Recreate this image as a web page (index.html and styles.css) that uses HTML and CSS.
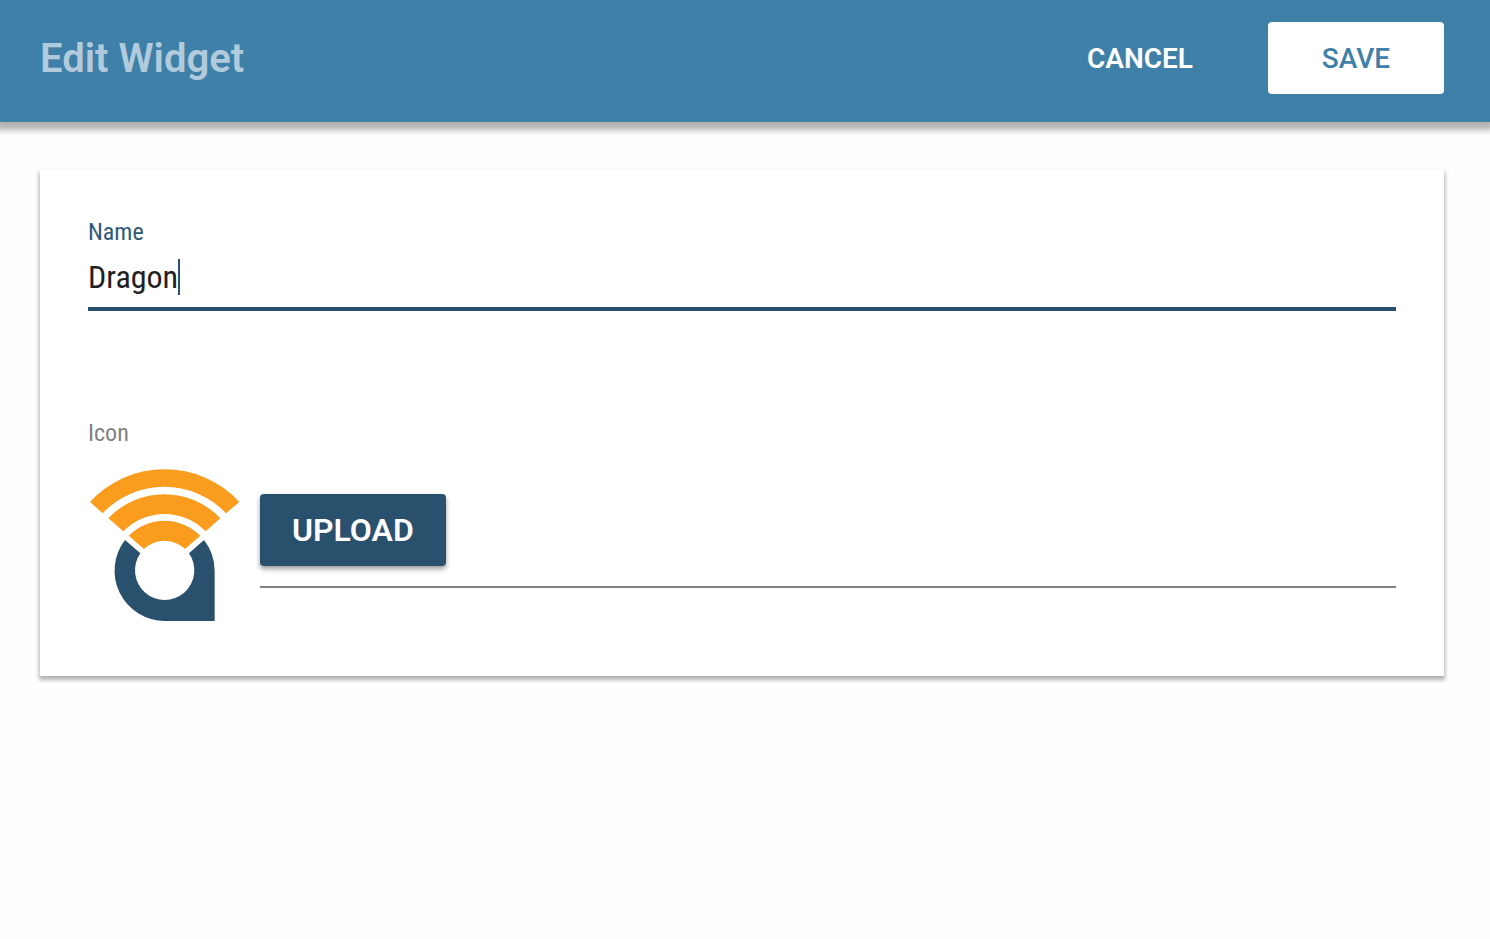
FILE: index.html
```html
<!DOCTYPE html>
<html lang="en">
<head>
<meta charset="utf-8">
<title>Edit Widget</title>
<link rel="stylesheet" href="styles.css">
</head>
<body>
<header class="toolbar">
  <h1 class="title">Edit Widget</h1>
  <div class="actions">
    <button class="btn btn-flat" type="button">CANCEL</button>
    <button class="btn btn-save" type="submit" form="widget-form">SAVE</button>
  </div>
</header>
<main class="content">
  <form class="card" id="widget-form">
    <div class="field">
      <label class="label label-active" for="name">Name</label>
      <div class="input-row">
        <input class="input" id="name" type="text" value="Dragon" size="6">
        <span class="caret"></span>
      </div>
    </div>
    <div class="field">
      <label class="label" for="upload">Icon</label>
      <div class="icon-row">
        <svg class="icon" viewBox="24 27 456 456" role="img" aria-label="Widget icon">
          <g fill="#fa9d1f">
            <path d="M30 126A304 304 0 0 1 478 126L438 160A254 254 0 0 0 68 160Z"/>
            <path d="M85 175A231 231 0 0 1 421 175L377 214A172 172 0 0 0 130 214Z"/>
            <path d="M146 227A152 152 0 0 1 361 227L315 267A89 89 0 0 0 192 267Z"/>
          </g>
          <path fill="#29506c" d="M135 240A151 151 0 0 0 254 483H404V332A151 151 0 0 0 372 240L327 280A89 89 0 1 1 181 280Z"/>
        </svg>
        <div class="upload-line">
          <button class="btn btn-upload" id="upload" type="button">UPLOAD</button>
        </div>
      </div>
    </div>
  </form>
</main>
</body>
</html>
```
FILE: styles.css
```css
* {
  box-sizing: border-box;
}

body {
  margin: 0;
  background: #fefefe;
  color: #212121;
  font-family: Roboto, sans-serif;
}

.toolbar {
  display: flex;
  align-items: center;
  justify-content: space-between;
  padding: 22px 46px 28px 40px;
  background: #3f80a9;
  box-shadow: 0 4px 6px 4px rgba(0, 0, 0, 0.3);
}

.title {
  margin: 0;
  padding-top: 2px;
  color: rgba(255, 255, 255, 0.6);
  font-size: 40px;
  font-weight: 600;
  line-height: 70px;
}

.actions {
  display: flex;
  gap: 44px;
}

.btn {
  height: 72px;
  padding: 2px 32px 0;
  border: 0;
  border-radius: 4px;
  font-family: inherit;
  font-size: 28px;
  font-weight: 500;
  line-height: 70px;
  cursor: pointer;
}

.btn-flat {
  padding-right: 31px;
  background: transparent;
  color: #fff;
  font-weight: 600;
}

.btn-save {
  min-width: 176px;
  background: #fff;
  color: #3f80a9;
}

.btn-upload {
  padding-top: 0;
  background: #29506c;
  color: #fff;
  font-size: 32px;
  font-weight: 600;
  line-height: 72px;
  box-shadow: 0 3px 5px rgba(0, 0, 0, 0.4);
}

.content {
  padding: 48px 46px 48px 40px;
}

.card {
  display: flex;
  flex-direction: column;
  gap: 108px;
  padding: 48px 48px 55px;
  background: #fff;
  box-shadow: 0 3px 4px 1px rgba(0, 0, 0, 0.3);
}

.field {
  font-family: "Roboto Condensed", Roboto, sans-serif;
}

.label {
  display: block;
  color: #808080;
  font-size: 24px;
  line-height: 28px;
}

.label-active {
  color: #2d5a7a;
}

.input-row {
  display: flex;
  align-items: center;
  padding: 12px 0;
  border-bottom: 4px solid #29506c;
}

.input {
  field-sizing: content;
  height: 37px;
  padding: 0;
  border: 0;
  outline: 0;
  background: transparent;
  color: #212121;
  caret-color: transparent;
  font-family: inherit;
  font-size: 32px;
}

.caret {
  width: 2px;
  height: 36px;
  background: #29506c;
}

.icon-row {
  display: flex;
  align-items: flex-start;
  gap: 20px;
  padding-top: 22px;
}

.icon {
  flex: none;
  width: 152px;
  height: 152px;
}

.upload-line {
  flex: 1;
  margin-top: 25px;
  padding-bottom: 20px;
  border-bottom: 2px solid #808080;
  font-family: Roboto, sans-serif;
}
```
